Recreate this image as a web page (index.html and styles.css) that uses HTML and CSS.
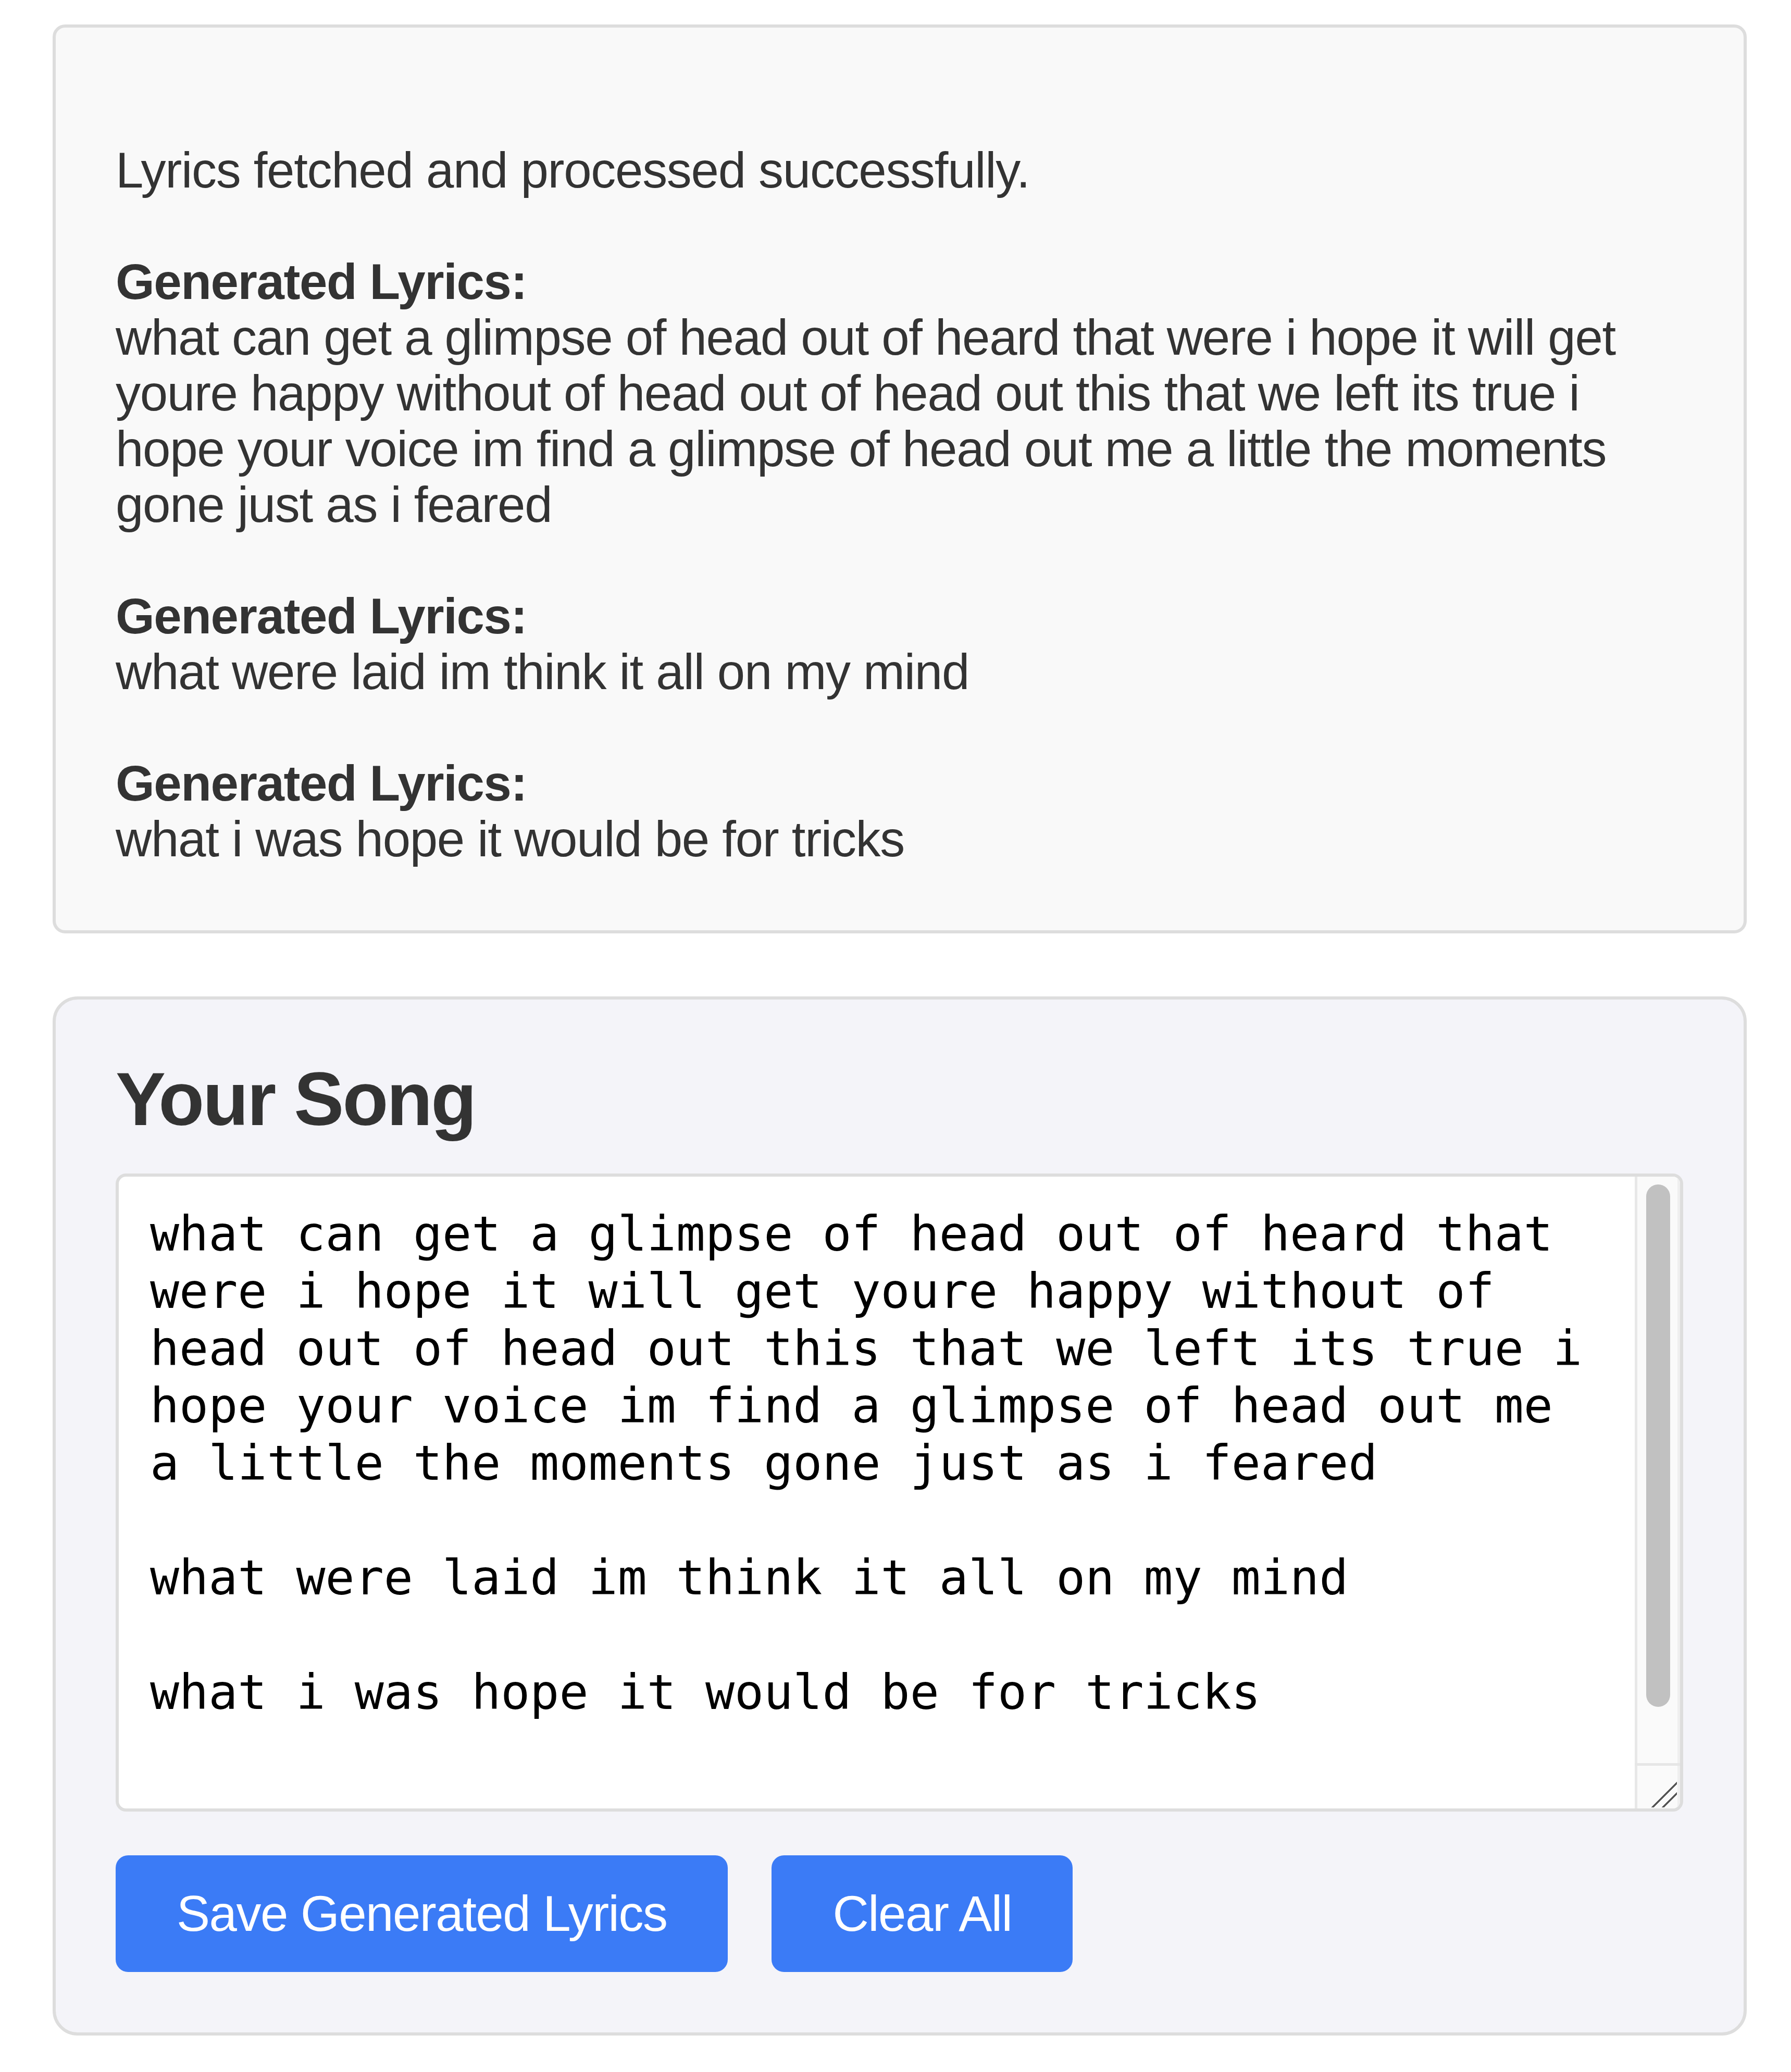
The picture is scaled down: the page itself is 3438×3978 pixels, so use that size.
FILE: index.html
```html
<!DOCTYPE html>
<html lang="en">
<head>
<meta charset="utf-8">
<title>Your Song</title>
<link rel="stylesheet" href="styles.css">
</head>
<body>
<main class="page">
  <section class="card result">
    <p class="status">Lyrics fetched and processed successfully.</p>
    <div class="entry">
      <strong class="label">Generated Lyrics:</strong>
      <p class="lyrics">what can get a glimpse of head out of heard that were i hope it will get youre happy without of head out of head out this that we left its true i hope your voice im find a glimpse of head out me a little the moments gone just as i feared</p>
    </div>
    <div class="entry">
      <strong class="label">Generated Lyrics:</strong>
      <p class="lyrics">what were laid im think it all on my mind</p>
    </div>
    <div class="entry">
      <strong class="label">Generated Lyrics:</strong>
      <p class="lyrics">what i was hope it would be for tricks</p>
    </div>
  </section>

  <section class="card song">
    <h2 class="song-title">Your Song</h2>
    <div class="editor">
      <textarea class="song-text" spellcheck="false">what can get a glimpse of head out of heard that were i hope it will get youre happy without of head out of head out this that we left its true i hope your voice im find a glimpse of head out me a little the moments gone just as i feared

what were laid im think it all on my mind

what i was hope it would be for tricks

</textarea>
      <div class="scrollbar" aria-hidden="true">
        <div class="track"><div class="thumb"></div></div>
        <div class="resizer"></div>
      </div>
    </div>
    <div class="actions">
      <button class="btn btn-save" type="button">Save Generated Lyrics</button>
      <button class="btn btn-clear" type="button">Clear All</button>
    </div>
  </section>
</main>
</body>
</html>
```

FILE: styles.css
```css
html, body {
  margin: 0;
  padding: 0;
  background: #ffffff;
}

body {
  font-family: "Liberation Sans", Arial, Helvetica, sans-serif;
  color: #333333;
}

.page {
  width: 3252px;
  padding: 47px 85px 70px 101px;
  display: flex;
  flex-direction: column;
  gap: 121px;
}

.card {
  box-sizing: border-box;
  border: 6px solid #dddddd;
}

/* ---------- result card ---------- */
.result {
  background: #f9f9f9;
  border-radius: 24px;
  padding: 220px 115px 122px 115px;
  display: flex;
  flex-direction: column;
  gap: 107px;
  font-size: 96px;
  line-height: 107px;
  letter-spacing: -1.3px;
}

.status,
.lyrics {
  margin: 0;
}

.entry {
  display: flex;
  flex-direction: column;
}

.label {
  font-weight: 700;
  letter-spacing: -1.4px;
}

/* ---------- song card ---------- */
.song {
  background: #f4f4f9;
  border-radius: 48px;
  padding: 111px 116px 116px 115px;
}

.song-title {
  margin: 0 0 62px 0;
  font-size: 144px;
  line-height: 161px;
  font-weight: 700;
  letter-spacing: -3px;
  color: #333333;
}

.editor {
  box-sizing: border-box;
  display: flex;
  height: 1225px;
  border: 6px solid #dddddd;
  border-radius: 20px;
  background: #ffffff;
  overflow: hidden;
}

.song-text {
  flex: 1;
  min-width: 0;
  box-sizing: border-box;
  height: 100%;
  margin: 0;
  padding: 55px 60px 55px 60px;
  border: 0;
  background: transparent;
  color: #000000;
  font-family: "DejaVu Sans Mono", "Liberation Mono", monospace;
  font-size: 93.2px;
  line-height: 110px;
  outline: none;
  overflow: hidden;
  resize: none;
}

.scrollbar {
  width: 87px;
  flex: 0 0 87px;
  display: flex;
  flex-direction: column;
}

.track {
  flex: 1;
  display: flex;
  justify-content: center;
  padding-top: 15px;
  padding-left: 3px;
  background: #fafafa;
  box-shadow: inset 5px 0 0 #e8e8e8, inset -5px 0 0 #efefef;
}

.thumb {
  width: 46px;
  height: 1003px;
  border-radius: 23px;
  background: #c1c1c1;
}

.resizer {
  height: 87px;
  flex: 0 0 87px;
  background-color: #fafafa;
  background-image:
    linear-gradient(#e6e6e6, #e6e6e6),
    linear-gradient(#e8e8e8, #e8e8e8),
    linear-gradient(#efefef, #efefef),
    linear-gradient(135deg, transparent 71.4%, #555555 71.4%, #555555 74.6%, transparent 74.6%, transparent 82.9%, #555555 82.9%, #555555 86.1%, transparent 86.1%);
  background-size: 100% 5px, 5px 100%, 5px 100%, 100% 100%;
  background-position: 0 0, 0 0, 100% 0, -6px -2px;
  background-repeat: no-repeat;
}

.actions {
  display: flex;
  gap: 84px;
  margin-top: 84px;
}

.btn {
  box-sizing: border-box;
  height: 224px;
  padding: 0 114px;
  border: 0;
  border-radius: 24px;
  background: #3b7bf6;
  color: #ffffff;
  font-family: "Liberation Sans", Arial, Helvetica, sans-serif;
  font-size: 96px;
  line-height: 110px;
  letter-spacing: -1.5px;
  cursor: pointer;
}

.btn-save {
  padding: 0 117px;
}

.btn-clear {
  padding: 0 117px;
}
```
